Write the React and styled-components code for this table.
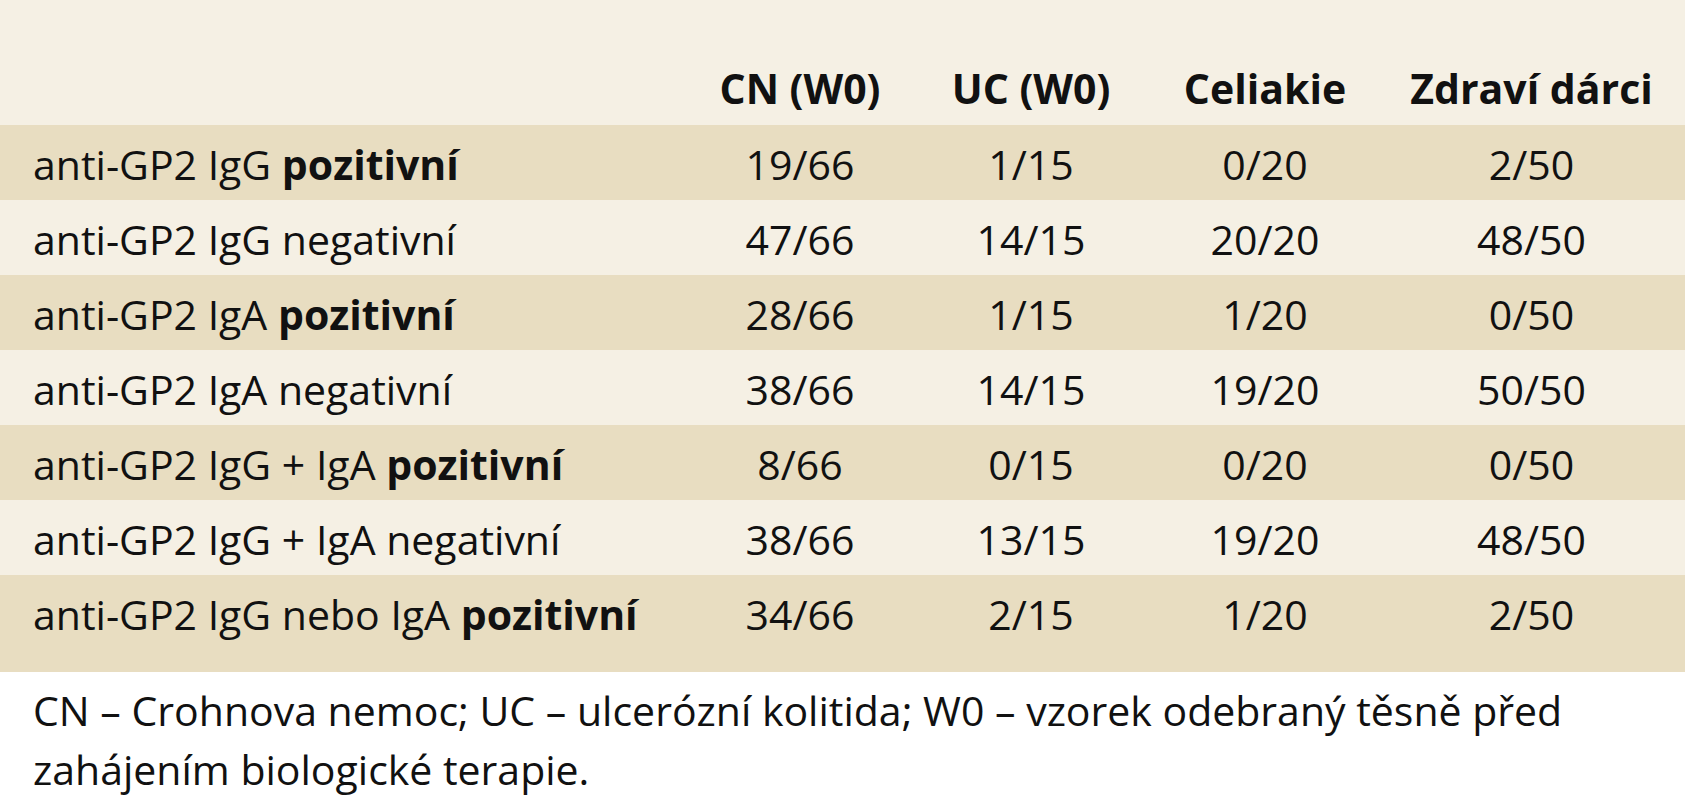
import React from 'react'
import styled, { createGlobalStyle } from 'styled-components'

const GlobalStyle = createGlobalStyle`
  html, body {
    margin: 0;
    padding: 0;
    background: #ffffff;
  }
  body {
    font-family: "Open Sans", "Noto Sans", sans-serif;
    color: #111111;
  }
`

const COLS = '690px 220px 242px 226px 307px'

const Table = styled.div`
  width: 1685px;
  background: #f5f0e4;
`

const HeadRow = styled.div`
  display: grid;
  grid-template-columns: ${COLS};
  height: 125px;
`

const HeadCell = styled.div`
  display: flex;
  align-items: flex-end;
  justify-content: center;
  padding-bottom: 8px;
  font-size: 41px;
  font-weight: 700;
  line-height: 1.362;
  white-space: nowrap;
`

const Row = styled.div`
  display: grid;
  grid-template-columns: ${COLS};
  box-sizing: border-box;
  height: ${p => (p.$last ? 97 : 75)}px;
  padding-top: 4px;
  background: ${p => (p.$shade ? '#e8ddc1' : '#f5f0e4')};
  font-size: 41px;
  line-height: 71px;
`

const Label = styled.div`
  padding-left: 33px;
  white-space: nowrap;

  b {
    font-weight: 700;
  }
`

const Value = styled.div`
  text-align: center;
  white-space: nowrap;
`

const Note = styled.p`
  margin: 0;
  padding: 9px 0 0 33px;
  font-size: 41px;
  line-height: 59px;
  white-space: nowrap;
`

const heads = ['CN (W0)', 'UC (W0)', 'Celiakie', 'Zdraví dárci']

const rows = [
  { label: 'anti-GP2 IgG ', strong: 'pozitivní', values: ['19/66', '1/15', '0/20', '2/50'] },
  { label: 'anti-GP2 IgG negativní', values: ['47/66', '14/15', '20/20', '48/50'] },
  { label: 'anti-GP2 IgA ', strong: 'pozitivní', values: ['28/66', '1/15', '1/20', '0/50'] },
  { label: 'anti-GP2 IgA negativní', values: ['38/66', '14/15', '19/20', '50/50'] },
  { label: 'anti-GP2 IgG + IgA ', strong: 'pozitivní', values: ['8/66', '0/15', '0/20', '0/50'] },
  { label: 'anti-GP2 IgG + IgA negativní', values: ['38/66', '13/15', '19/20', '48/50'] },
  { label: 'anti-GP2 IgG nebo IgA ', strong: 'pozitivní', values: ['34/66', '2/15', '1/20', '2/50'] },
]

export default function App() {
  return (
    <>
      <GlobalStyle />
      <Table>
        <HeadRow>
          <div />
          {heads.map(h => (
            <HeadCell key={h}>{h}</HeadCell>
          ))}
        </HeadRow>
        {rows.map((r, i) => (
          <Row key={i} $shade={i % 2 === 0} $last={i === rows.length - 1}>
            <Label>
              {r.label}
              {r.strong && <b>{r.strong}</b>}
            </Label>
            {r.values.map((v, j) => (
              <Value key={j}>{v}</Value>
            ))}
          </Row>
        ))}
      </Table>
      <Note>
        CN – Crohnova nemoc; UC – ulcerózní kolitida; W0 – vzorek odebraný těsně před
        <br />
        zahájením biologické terapie.
      </Note>
    </>
  )
}
